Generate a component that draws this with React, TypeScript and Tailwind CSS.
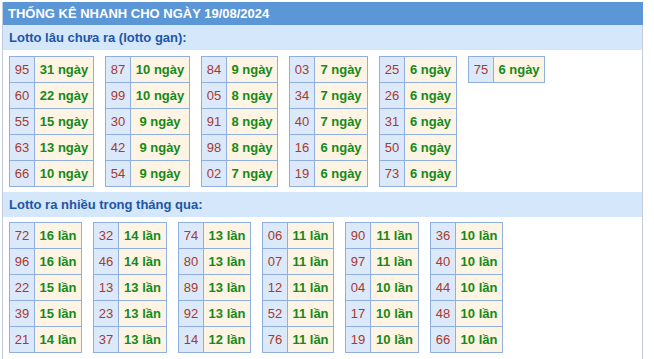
import React from "react";

type Row = [string, string];

const gan: { w: number; rows: Row[] }[] = [
  { w: 85, rows: [["95", "31"], ["60", "22"], ["55", "15"], ["63", "13"], ["66", "10"]] },
  { w: 85, rows: [["87", "10"], ["99", "10"], ["30", "9"], ["42", "9"], ["54", "9"]] },
  { w: 77, rows: [["84", "9"], ["05", "8"], ["91", "8"], ["98", "8"], ["02", "7"]] },
  { w: 79, rows: [["03", "7"], ["34", "7"], ["40", "7"], ["16", "6"], ["19", "6"]] },
  { w: 78, rows: [["25", "6"], ["26", "6"], ["31", "6"], ["50", "6"], ["73", "6"]] },
  { w: 77, rows: [["75", "6"]] },
];

const nhieu: { w: number; rows: Row[] }[] = [
  { w: 73, rows: [["72", "16"], ["96", "16"], ["22", "15"], ["39", "15"], ["21", "14"]] },
  { w: 74, rows: [["32", "14"], ["46", "14"], ["13", "13"], ["23", "13"], ["37", "13"]] },
  { w: 73, rows: [["74", "13"], ["80", "13"], ["89", "13"], ["92", "13"], ["14", "12"]] },
  { w: 72, rows: [["06", "11"], ["07", "11"], ["12", "11"], ["52", "11"], ["76", "11"]] },
  { w: 74, rows: [["90", "11"], ["97", "11"], ["04", "10"], ["17", "10"], ["19", "10"]] },
  { w: 73, rows: [["36", "10"], ["40", "10"], ["44", "10"], ["48", "10"], ["66", "10"]] },
];

function Block({ rows, unit, w }: { rows: Row[]; unit: string; w: number }) {
  return (
    <div
      className="flex flex-col self-start border-l border-t border-[#8eafe0] shrink-0"
      style={{ width: w }}
    >
      {rows.map(([n, v], i) => (
        <div key={i} className="flex h-[26px]">
          <div className="w-[25px] shrink-0 border-r border-b border-[#8eafe0] bg-[#dce9fb] flex items-center justify-center text-[13px] text-[#a63a2b]">
            {n}
          </div>
          <div className="flex-1 border-r border-b border-[#8eafe0] bg-[#fef4e3] flex items-center justify-center text-[13px] font-bold text-[#15891a] whitespace-nowrap">
            {v} {unit}
          </div>
        </div>
      ))}
    </div>
  );
}

function Band({ children }: { children: React.ReactNode }) {
  return (
    <div className="h-[25px] bg-[#d5e7fa] pl-[6px] flex items-center text-[13px] font-bold text-[#1c56a8]">
      {children}
    </div>
  );
}

export default function App() {
  return (
    <div
      className="bg-white w-[654px] h-[359px] overflow-hidden pt-[2px] pl-[2px]"
      style={{ fontFamily: '"Liberation Sans", Arial, sans-serif' }}
    >
      <div className="w-[641px] h-[357px] border-x border-[#c3cde0] flex flex-col">
        <div className="h-[23px] bg-[#5b96d6] pl-[5px] flex items-center text-[13px] font-bold text-white -mr-px">
          THỐNG KÊ NHANH CHO NGÀY 19/08/2024
        </div>
        <Band>Lotto lâu chưa ra (lotto gan):</Band>
        <div className="flex gap-[11px] pl-[6px] mt-[6px] h-[131px]">
          {gan.map((t, i) => (
            <Block key={i} rows={t.rows} w={t.w} unit="ngày" />
          ))}
        </div>
        <div className="mt-[5px]">
          <Band>Lotto ra nhiều trong tháng qua:</Band>
        </div>
        <div className="flex gap-[11px] pl-[6px] mt-[5px] h-[131px]">
          {nhieu.map((t, i) => (
            <Block key={i} rows={t.rows} w={t.w} unit="lần" />
          ))}
        </div>
      </div>
    </div>
  );
}
